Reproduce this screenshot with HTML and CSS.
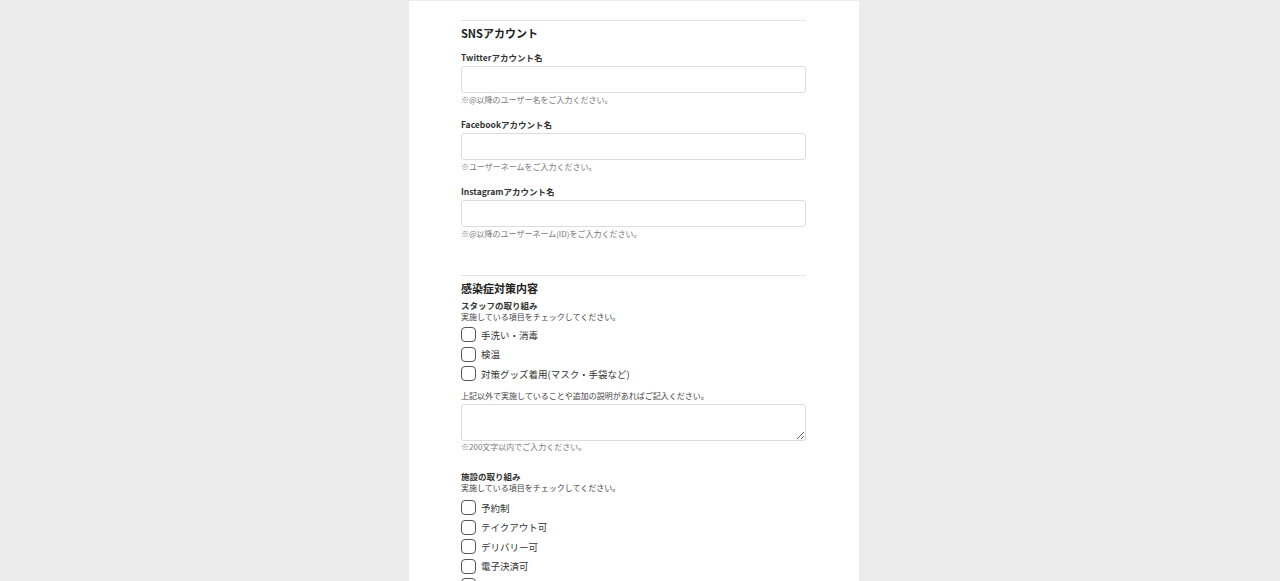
FILE: index.html
```html
<!DOCTYPE html>
<html lang="ja">
<head>
<meta charset="utf-8">
<title>登録フォーム</title>
<link rel="stylesheet" href="styles.css">
</head>
<body>
<main class="panel">
  <section class="section sns">
    <h2 class="section-title">SNSアカウント</h2>
    <div class="field">
      <label class="label">Twitterアカウント名</label>
      <input class="text-input" type="text">
      <p class="hint">※@以降のユーザー名をご入力ください。</p>
    </div>
    <div class="field">
      <label class="label">Facebookアカウント名</label>
      <input class="text-input" type="text">
      <p class="hint">※ユーザーネームをご入力ください。</p>
    </div>
    <div class="field">
      <label class="label">Instagramアカウント名</label>
      <input class="text-input" type="text">
      <p class="hint">※@以降のユーザーネーム(ID)をご入力ください。</p>
    </div>
  </section>

  <section class="section measures">
    <h2 class="section-title tight">感染症対策内容</h2>
    <div class="group">
      <div class="label">スタッフの取り組み</div>
      <p class="desc">実施している項目をチェックしてください。</p>
      <ul class="checks">
        <li class="check"><span class="box"></span>手洗い・消毒</li>
        <li class="check"><span class="box"></span>検温</li>
        <li class="check"><span class="box"></span>対策グッズ着用(マスク・手袋など)</li>
      </ul>
      <p class="desc extra">上記以外で実施していることや追加の説明があればご記入ください。</p>
      <textarea class="area"></textarea>
      <p class="hint">※200文字以内でご入力ください。</p>
    </div>
    <div class="group second">
      <div class="label">施設の取り組み</div>
      <p class="desc">実施している項目をチェックしてください。</p>
      <ul class="checks">
        <li class="check"><span class="box"></span>予約制</li>
        <li class="check"><span class="box"></span>テイクアウト可</li>
        <li class="check"><span class="box"></span>デリバリー可</li>
        <li class="check"><span class="box"></span>電子決済可</li>
        <li class="check"><span class="box"></span>換気の徹底</li>
      </ul>
    </div>
  </section>
</main>
</body>
</html>
```

FILE: styles.css
```css
html, body {
  margin: 0;
  padding: 0;
  background: #ececec;
  font-family: "Noto Sans CJK JP", "Noto Sans", sans-serif;
  color: #333;
}
.panel {
  width: 450px;
  margin: 1px auto 0 409px;
  background: #fff;
  padding: 19px 53px 40px 52px;
  box-sizing: border-box;
  min-height: 700px;
}
.section {
  border-top: 1px solid #e6e6e6;
  padding-top: 5px;
}
.sns {
  margin-bottom: 35px;
}
.section-title {
  margin: 0 0 11px;
  font-size: 11px;
  line-height: 14px;
  font-weight: 700;
  color: #222;
}
.section-title.tight {
  margin-bottom: 4px;
}
.field {
  display: flex;
  flex-direction: column;
  margin-bottom: 12px;
}
.label {
  display: block;
  font-size: 8.5px;
  line-height: 12px;
  font-weight: 700;
  color: #333;
}
.field .label {
  margin-bottom: 3px;
}
.text-input {
  display: block;
  width: 345px;
  height: 27px;
  box-sizing: border-box;
  border: 1px solid #dcdcdc;
  border-radius: 3px;
  margin: 0;
  padding: 0 6px;
  background: #fff;
}
.hint {
  margin: 0;
  font-size: 8px;
  line-height: 13px;
  color: #777;
}
.group .hint {
  line-height: 12px;
}
.desc {
  margin: 0;
  font-size: 8px;
  line-height: 12px;
  color: #444;
}
.desc.extra {
  margin-top: 6.5px;
}
.checks {
  list-style: none;
  margin: 2px 0 0;
  padding: 0;
}
.check {
  display: flex;
  align-items: center;
  gap: 5px;
  height: 19.6px;
  font-size: 9.5px;
  color: #333;
}
.box {
  width: 15px;
  height: 15px;
  box-sizing: border-box;
  border: 1.5px solid #555;
  border-radius: 4px;
  background: #fff;
  flex: none;
}
.area {
  display: block;
  width: 345px;
  height: 37px;
  box-sizing: border-box;
  border: 1px solid #dcdcdc;
  border-radius: 3px;
  margin: 2px 0 0;
  padding: 4px 6px;
  resize: vertical;
  font-family: inherit;
}
.second {
  margin-top: 17px;
}
.second .checks {
  margin-top: 3.5px;
}
```
